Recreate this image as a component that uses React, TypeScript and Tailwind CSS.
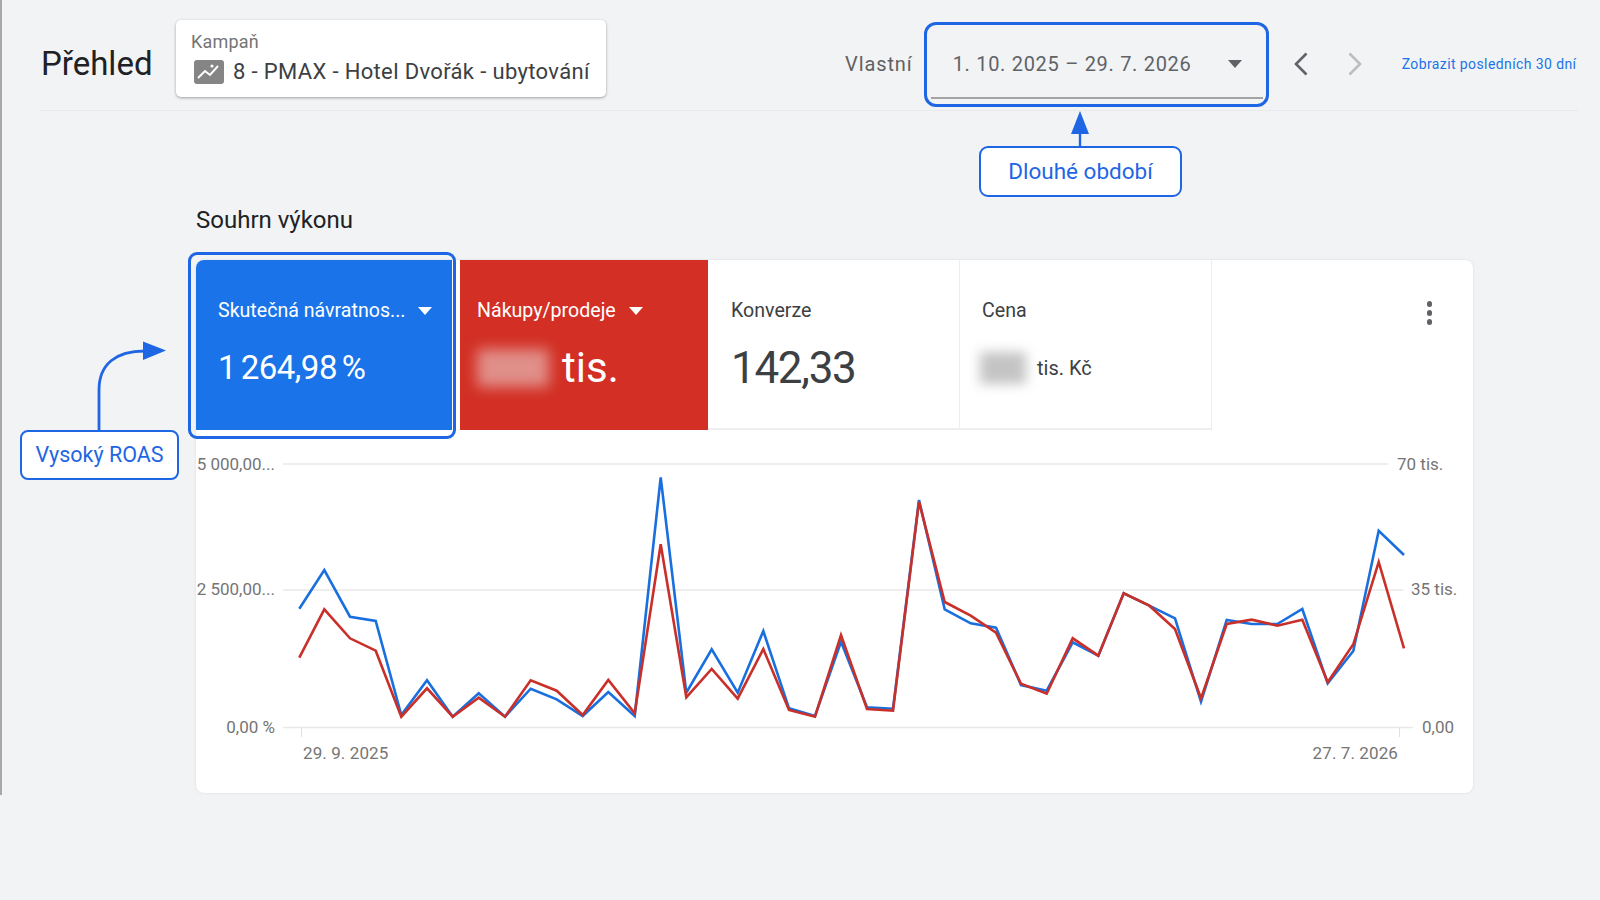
const bluePoints = "299.3,608.7 324.3,570 350,616.7 375.7,621 401.3,715 427,680.3 452.7,716.7 478.7,693.3 505,716.7 530.7,688.7 556.7,699.3 582.7,716 608.3,692 634.7,716 660.7,477.3 686.3,692.7 711.7,649.3 737.7,692.7 763.3,631 789,708.3 815,716 841,641.7 867,707.3 893,708.7 919,500 944.7,609.3 970.7,623.3 996,627.7 1021,685 1046.7,690.7 1072.7,642.3 1098.3,655.7 1123.7,593.3 1149.3,605.7 1175,618.3 1201,701.7 1226.7,620 1251.7,624 1277.3,624 1302.3,609 1327.7,683.3 1353.3,651 1378.7,530.7 1404,555";
const redPoints = "299.3,657.7 324.3,609.3 350,638.3 375.7,650.7 401.3,716.7 427,688.3 452.7,716.7 478.7,697.7 505,716.7 530.7,680.3 556.7,690.7 582.7,715 608.3,680 634.7,713.3 660.7,544.3 686.3,697.3 711.7,669 737.7,698.7 763.3,649 789,710 815,716.7 841,635 867,709 893,710.7 919,501.7 944.7,602 970.7,615.7 996,632.7 1021,683.7 1046.7,693.7 1072.7,638.3 1098.3,655.7 1123.7,593.3 1149.3,605.7 1175,629 1201,698.3 1226.7,624 1251.7,619.7 1277.3,625.7 1302.3,619.7 1327.7,682.3 1353.3,644.3 1378.7,562 1404,648.3";

function Caret({ className }: { className: string }) {
  return (
    <svg className={className} viewBox="0 0 14 8" width="14" height="8" fill="currentColor">
      <path d="M0 0h14L7 8z" />
    </svg>
  );
}

function Chart() {
  const label = { fontFamily: "Roboto, sans-serif", fontSize: 17, fill: "#757575" };
  return (
    <svg className="block" width="1277" height="363" viewBox="196 430 1277 363">
      <g stroke="#e8e8e8" strokeWidth="1.6">
        <path d="M283 464H1388" />
        <path d="M283 590H1403" />
        <path d="M283 727.5H1413" />
      </g>
      <g stroke="#e0e0e0" strokeWidth="1">
        <path d="M301.5 728V737" />
        <path d="M1399.5 728V737" />
      </g>
      <polyline points={bluePoints} fill="none" stroke="#1a6fdf" strokeWidth="2.6" strokeLinejoin="miter" />
      <polyline points={redPoints} fill="none" stroke="#c9302a" strokeWidth="2.6" strokeLinejoin="miter" />
      <text {...label} x="275" y="470" textAnchor="end">5 000,00...</text>
      <text {...label} x="275" y="595" textAnchor="end">2 500,00...</text>
      <text {...label} x="275" y="733" textAnchor="end">0,00 %</text>
      <text {...label} x="303" y="759" letterSpacing="0.1">29. 9. 2025</text>
      <text {...label} x="1398" y="759" textAnchor="end" letterSpacing="0.1">27. 7. 2026</text>
      <text {...label} x="1397" y="470">70 tis.</text>
      <text {...label} x="1411" y="595">35 tis.</text>
      <text {...label} x="1422" y="733">0,00</text>
    </svg>
  );
}

export default function App() {
  return (
    <div className="relative flex h-[900px] w-[1600px] overflow-hidden bg-[#f2f3f4] font-['Roboto',sans-serif] text-[#3c4043]">
      <div className="h-[795px] w-[2px] shrink-0 bg-[#a8a8a8]" />

      <main className="flex w-[1538px] flex-col ml-[38px]">
        {/* Header */}
        <header className="flex h-[111px] items-start border-b border-[#e8eaed]">
          <h1 className="mt-[44px] w-[136px] pl-[1px] text-[33px] leading-[40px] text-[#202124]">Přehled</h1>

          <div className="mt-[20px] h-[77px] w-[430px] rounded-[5px] bg-white pl-[15px] pt-[12px] shadow-[0_1px_3px_rgba(0,0,0,0.35)]">
            <div className="text-[18px] leading-[20px] tracking-[0.2px] text-[#757575]">Kampaň</div>
            <div className="mt-[8px] ml-[3px] flex items-center gap-[9px]">
              <svg width="30" height="24" viewBox="0 0 30 24" className="shrink-0">
                <rect width="30" height="24" rx="3" fill="#858585" />
                <path d="M4 18l7-7 5 4 8-9" fill="none" stroke="#fff" strokeWidth="2" />
                <circle cx="18" cy="6" r="1.6" fill="#fff" />
              </svg>
              <span className="text-[22px] font-[450] leading-[24px] tracking-[0.35px] whitespace-nowrap">8 - PMAX - Hotel Dvořák - ubytování</span>
            </div>
          </div>

          <span className="ml-[239px] mt-[52px] text-[20px] leading-[24px] tracking-[0.9px] text-[#616161]">Vlastní</span>

          <div className="relative ml-[11px] mt-[22px] flex h-[85px] w-[345px] items-start rounded-[12px] border-[3.5px] border-[#1f66e5] pl-[26px] pt-[26.5px]">
            <span className="text-[20px] leading-[24px] tracking-[0.7px] text-[#5f6368]">1. 10. 2025 – 29. 7. 2026</span>
            <Caret className="ml-auto mr-[24px] mt-[8px] text-[#5f6368]" />
            <div className="absolute bottom-[5px] left-[4px] right-[3px] h-[2px] bg-[#a3a3a3]" />
          </div>

          <svg width="14" height="24" viewBox="0 0 14 24" className="ml-[25px] mt-[52px] shrink-0">
            <path d="M12.5 1.5L2 12l10.5 10.5" fill="none" stroke="#5f6368" strokeWidth="2.6" />
          </svg>
          <svg width="14" height="24" viewBox="0 0 14 24" className="ml-[40px] mt-[52px] shrink-0">
            <path d="M1.5 1.5L12 12 1.5 22.5" fill="none" stroke="#bdbdbd" strokeWidth="2.6" />
          </svg>
          <a className="ml-[40px] mt-[55px] whitespace-nowrap text-[14px] font-[450] leading-[18px] tracking-[0.4px] text-[#1a73e8]">Zobrazit posledních 30 dní</a>
        </header>

        {/* Performance summary */}
        <section className="ml-[156px] w-[1277px]">
          <h2 className="mb-[26px] mt-[95px] h-[28px] text-[24px] leading-[28px] text-[#202124]">Souhrn výkonu</h2>

          <div className="relative rounded-[8px] bg-white shadow-[0_0_3px_rgba(0,0,0,0.1)]">
            <div className="flex h-[170px] items-stretch">
              <div className="relative w-[256px] rounded-tl-[8px] bg-[#1a73e8] pl-[22px] pt-[39px] text-white">
                <div className="flex h-[24px] items-center text-[19.6px]">
                  <span className="w-[201px] whitespace-nowrap">Skutečná návratnos...</span>
                  <Caret className="-ml-[1px] text-white" />
                </div>
                <div className="mt-[25px] text-[33px] leading-[40px] tracking-[-0.5px] [word-spacing:-3px]">1 264,98 %</div>
                {/* ROAS highlight */}
                <div className="absolute -bottom-[9px] -left-[8px] -right-[4px] -top-[8px] rounded-[9px] border-[3.5px] border-[#1f66e5]" />
              </div>

              <div className="ml-[8px] w-[248px] bg-[#d32f24] pl-[17px] pt-[39px] text-white">
                <div className="flex h-[24px] items-center text-[19.6px]">
                  <span className="w-[153px] whitespace-nowrap">Nákupy/prodeje</span>
                  <Caret className="-ml-[1px] text-white" />
                </div>
                <div className="mt-[21px] flex h-[48px] items-center">
                  <div className="h-[38px] w-[72px] bg-[#e08f8a] blur-[7px]" />
                  <span className="ml-[13px] text-[42px] leading-[48px]">tis.</span>
                </div>
              </div>

              <div className="w-[252px] border-b-2 border-r border-[#eeeeee] pl-[23px] pt-[39px]">
                <div className="flex h-[24px] items-center text-[19.6px]">Konverze</div>
                <div className="mt-[21px] text-[44px] leading-[48px] tracking-[-1.3px]">142,33</div>
              </div>

              <div className="w-[252px] border-b-2 border-r border-[#eeeeee] pl-[22px] pt-[39px]">
                <div className="flex h-[24px] items-center text-[19.6px]">Cena</div>
                <div className="mt-[21px] flex h-[48px] items-center">
                  <div className="-ml-[2px] h-[32px] w-[46px] bg-[#c4c4c4] blur-[6px]" />
                  <span className="ml-[11px] text-[20px]">tis. Kč</span>
                </div>
              </div>

              <div className="flex flex-1 justify-end pr-[41px] pt-[41px]">
                <div className="flex flex-col gap-[3.5px]">
                  <span className="h-[5.5px] w-[5.5px] rounded-full bg-[#5f6368]" />
                  <span className="h-[5.5px] w-[5.5px] rounded-full bg-[#5f6368]" />
                  <span className="h-[5.5px] w-[5.5px] rounded-full bg-[#5f6368]" />
                </div>
              </div>
            </div>
            <Chart />
          </div>
        </section>
      </main>

      {/* Annotations */}
      <div className="absolute left-[979px] top-[146px] flex h-[51px] w-[203px] items-center justify-center rounded-[9px] border-[2.5px] border-[#1f66e5] bg-white text-[22.5px] text-[#1f66e5]">
        Dlouhé období
      </div>
      <svg className="absolute left-[1070px] top-[110px]" width="20" height="37" viewBox="0 0 20 37">
        <path d="M10 1L19 24H1z" fill="#1f66e5" />
        <path d="M10 24V37" stroke="#1f66e5" strokeWidth="2.4" />
      </svg>

      <div className="absolute left-[20px] top-[430px] flex h-[50px] w-[159px] items-center justify-center rounded-[8px] border-[2.5px] border-[#1f66e5] bg-white text-[21.5px] text-[#1f66e5]">
        Vysoký ROAS
      </div>
      <svg className="absolute left-[90px] top-[340px]" width="78" height="91" viewBox="0 0 78 91">
        <path d="M9 91V50C9 24 26 11 55 11" fill="none" stroke="#1f66e5" strokeWidth="2.8" />
        <path d="M53 1.5L76 10.500L53 20z" fill="#1f66e5" />
      </svg>
    </div>
  );
}
